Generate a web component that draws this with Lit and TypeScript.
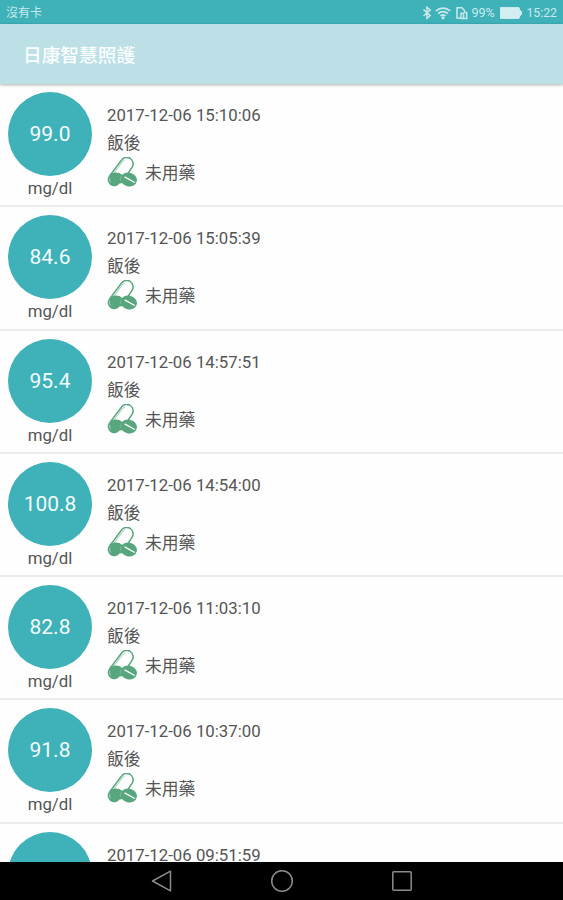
import { LitElement, html, css, svg } from "lit";
import { customElement, property } from "lit/decorators.js";

interface Reading {
  value: string;
  time: string;
}

const READINGS: Reading[] = [
  { value: "99.0", time: "2017-12-06 15:10:06" },
  { value: "84.6", time: "2017-12-06 15:05:39" },
  { value: "95.4", time: "2017-12-06 14:57:51" },
  { value: "100.8", time: "2017-12-06 14:54:00" },
  { value: "82.8", time: "2017-12-06 11:03:10" },
  { value: "91.8", time: "2017-12-06 10:37:00" },
  { value: "", time: "2017-12-06 09:51:59" },
];

const pills = svg`
  <path d="M3 18.4L14.4 3.2A6.3 6.3 0 0 1 25 10.4L21.3 16" fill="none" stroke="#58a67e" stroke-width="1.5"/>
  <path d="M6.2 17L15.9 4.2a4 4 0 0 1 2.2-1.4" fill="none" stroke="#58a67e" stroke-opacity=".7" stroke-width="0.8"/>
  <path d="M3 17.2C5.5 15.4 9.5 14.8 12.4 16L16 18.5V26L12.6 26.6A6.4 6.4 0 0 1 2 18.7z" fill="#58a67e"/>
  <path d="M2.8 20.8a5 5 0 0 0 .8 4.6" fill="none" stroke="#b9dbc9" stroke-width="0.8"/>
  <ellipse cx="21.7" cy="22.5" rx="8.3" ry="6.8" transform="rotate(12 21.7 22.5)" fill="#58a67e"/>
  <path d="M14.3 19.3a7 7 0 0 0-1 4.6" fill="none" stroke="#8cc2a5" stroke-width=".7"/>
  <path d="M17.6 19.8L27.8 25.5" stroke="#fff" stroke-width="1.4"/>`;

@customElement("status-bar")
export class StatusBar extends LitElement {
  static styles = css`
    :host {
      display: flex;
      align-items: center;
      flex: none;
      height: 24px;
      padding: 2px 6px 0 6px;
      box-sizing: border-box;
      background: #3eb1b9;
      color: #c9eaed;
      font-size: 12px;
      line-height: 20px;
    }
    .carrier { flex: 1; }
    svg { display: block; fill: none; stroke: #c9eaed; }
    .bluetooth { margin-right: 3px; }
    .wifi { margin-right: 5px; }
    .saver { margin-right: 3px; }
    .percent { width: 26px; margin-right: 3px; font-size: 12.6px; }
    .battery { margin-right: 4px; }
    .clock { font-size: 12.3px; }
  `;
  render() {
    return html`
      <span class="carrier">沒有卡</span>
      <svg class="bluetooth" width="10" height="14" viewBox="0 0 10 14" stroke-width="1.5">
        <path d="M1.5 3.5L8.2 9.6 5 12.3V1.3L8.2 4 1.5 10" />
      </svg>
      <svg class="wifi" width="16" height="14" viewBox="0 0 16 14" stroke-width="1.7">
        <path d="M.8 5a10.5 10.5 0 0 1 14.4 0M3.1 7.6a7 7 0 0 1 9.8 0M5.5 10a3.6 3.6 0 0 1 5 0" />
        <circle cx="8" cy="11.8" r=".7" />
      </svg>
      <svg class="saver" width="12" height="14" viewBox="0 0 12 14" stroke-width="1.5">
        <path d="M4.5 12H1V1.8h5l2.5 2.7V6" />
        <path d="M5 12.5V7.2h2.6v5.3zM8.5 6.5h2.2v6H8.5" />
      </svg>
      <span class="percent">99%</span>
      <svg class="battery" width="22" height="12" viewBox="0 0 22 12" stroke="none">
        <path d="M1 .5h17.4q1.1 0 1.1 1.1V3l2 1.5v3L19.5 9v1.4q0 1.1-1.1 1.1H1q-1 0-1-1V1.5q0-1 1-1z" fill="#d3eef0" />
      </svg>
      <span class="clock">15:22</span>
    `;
  }
}

@customElement("reading-row")
export class ReadingRow extends LitElement {
  @property({ attribute: false }) reading!: Reading;
  static styles = css`
    :host {
      display: flex;
      flex: none;
      height: 123.3px;
      box-sizing: border-box;
      padding: 8px 8px 0;
      border-bottom: 2px solid #ececec;
      color: #555;
      font-size: 16.8px;
    }
    .gauge {
      display: flex;
      flex-direction: column;
      align-items: center;
      width: 84px;
      margin-right: 15px;
    }
    .disc {
      display: flex;
      align-items: center;
      justify-content: center;
      flex: none;
      width: 84px;
      height: 84px;
      border-radius: 50%;
      background: #3eb1b9;
      color: #f4fcfc;
      font-size: 21px;
    }
    .unit { line-height: 24px; }
    .details { padding-top: 10px; }
    .time { line-height: 27px; }
    .meal { line-height: 28px; }
    .drug {
      display: flex;
      align-items: center;
      height: 30px;
      gap: 7px;
    }
    svg { display: block; }
  `;
  render() {
    return html`
      <div class="gauge">
        <div class="disc">${this.reading.value}</div>
        <div class="unit">mg/dl</div>
      </div>
      <div class="details">
        <div class="time">${this.reading.time}</div>
        <div class="meal">飯後</div>
        <div class="drug">
          <svg width="31" height="30" viewBox="0 0 31 30">${pills}</svg>
          <span>未用藥</span>
        </div>
      </div>
    `;
  }
}

@customElement("app-root")
export class AppRoot extends LitElement {
  static styles = css`
    :host {
      display: flex;
      flex-direction: column;
      width: 563px;
      height: 900px;
      overflow: hidden;
      background: #fefefe;
      font-family: Roboto, "Noto Sans CJK TC", sans-serif;
    }
    .title {
      display: flex;
      align-items: center;
      flex: none;
      height: 60px;
      box-sizing: border-box;
      padding: 0 23px 2px;
      background: #bce0e5;
      box-shadow: 0 1px 3px rgba(0, 0, 0, 0.32);
      color: #fafeff;
      font-size: 18.7px;
      font-weight: 500;
      z-index: 1;
    }
    .list {
      display: flex;
      flex-direction: column;
      flex: 1;
      min-height: 0;
      overflow: hidden;
    }
    .nav {
      display: flex;
      flex: none;
      align-items: center;
      justify-content: center;
      gap: 96px;
      height: 38.5px;
      background: #000;
    }
    .nav svg { display: block; fill: none; stroke: #8c8c8c; stroke-width: 1.5; }
  `;
  render() {
    return html`
      <status-bar></status-bar>
      <div class="title">日康智慧照護</div>
      <div class="list">
        ${READINGS.map((r) => html`<reading-row .reading=${r}></reading-row>`)}
      </div>
      <div class="nav">
        <svg width="24" height="24" viewBox="0 0 24 24"><path d="M2.5 12L20.5 2.2V21.8z" stroke-linejoin="round" /></svg>
        <svg width="24" height="24" viewBox="0 0 24 24"><circle cx="12" cy="12" r="10.3" /></svg>
        <svg width="24" height="24" viewBox="0 0 24 24"><rect x="2.8" y="2.8" width="18.4" height="18.4" rx="1" /></svg>
      </div>
    `;
  }
}
